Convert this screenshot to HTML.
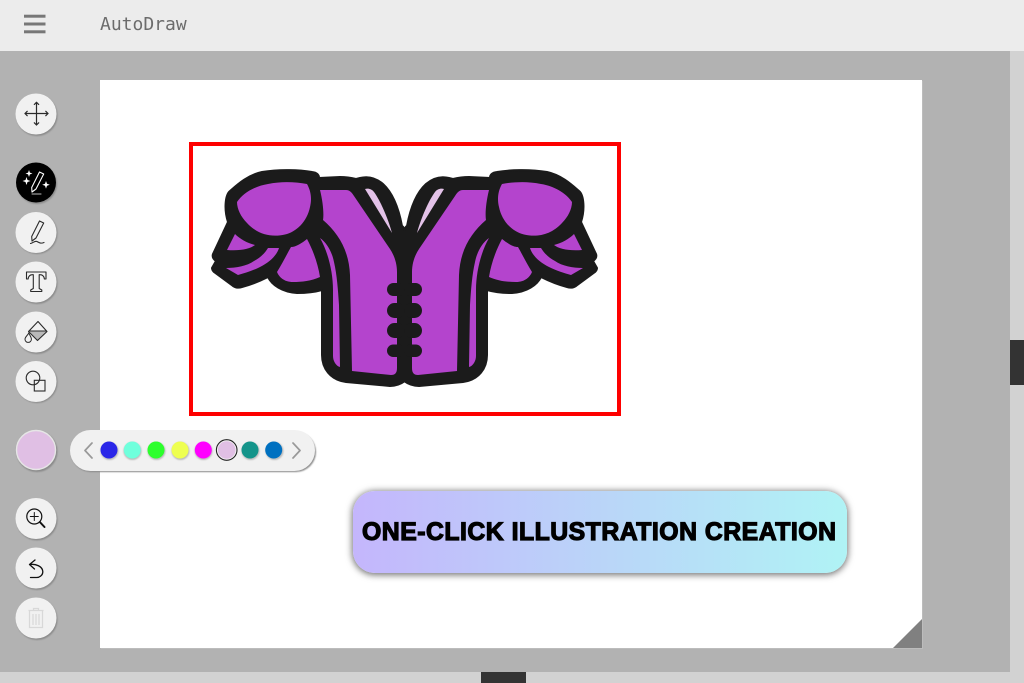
<!DOCTYPE html>
<html lang="en">
<head>
<meta charset="utf-8">
<title>AutoDraw</title>
<style>
html,body{margin:0;padding:0;width:1024px;height:683px;overflow:hidden;background:#b2b2b2}
.abs{position:absolute}
#sr{left:1010px;top:0;width:14px;height:683px;background:#d2d2d2}
#hdr{left:0;top:0;width:1024px;height:51px;background:#ececec}
#srt{left:1010px;top:340px;width:14px;height:45px;background:#333}
#sb{left:0;top:672px;width:1024px;height:11px;background:#d2d2d2}
#sbt{left:481px;top:672px;width:45px;height:11px;background:#333}
#title{left:100px;top:14px;font:18px/22px "DejaVu Sans Mono",monospace;color:#6c6c6c}
#cv{left:100px;top:80px;width:822px;height:568px;background:#fff;box-shadow:1px 1px 0 0 #bcbcbc}
#ban{left:353px;top:491px;width:494px;height:82px;border-radius:22px;background:linear-gradient(90deg,#c4b6fc,#b0f3f5);box-shadow:0 1px 7px 1px rgba(0,0,0,.55)}
svg{position:absolute;left:0;top:0}
</style>
</head>
<body>
<div class="abs" id="sr"></div>
<div class="abs" id="hdr"></div>
<div class="abs" id="sb"></div>
<div class="abs" id="srt"></div>
<div class="abs" id="sbt"></div>
<div class="abs" id="title">AutoDraw</div>
<div class="abs" id="cv"></div>
<div class="abs" id="ban"></div>
<svg width="1024" height="683" viewBox="0 0 1024 683" fill="none">
<defs>
<filter id="sh" x="-20%" y="-20%" width="140%" height="150%"><feGaussianBlur stdDeviation=".7"/></filter>
<g id="half">
  <path fill="#1b1b1b" stroke="#1b1b1b" stroke-width="2" stroke-linejoin="round" d="M319 178C319 174 316 172.500 312 172C300 170 280 169 262 172C248 175 238 184 230 191C225 195 224 210 228 222L213 254C212 257 213 259 216 261L212 268C212 270 213 271 214 272L233 286C236 288 239 288 242 287C250 285 260 281 268 277C272 285 282 292 297 293C306 293 315 292 322 290L322 355C322 368 330 380 346 382L390 386C396 386 401 384 405 381L405 231C404 228 403 226 402 226C399 210 394 194 383 184C376 178 368 176 360 178L356 179C352 178 345 177 340 177L319 178Z"/>
  <path fill="#b444cd" d="M320 190L346 190C350 190 352 193 354 196L390 249C394 255 397 263 397 272L397 368C397 373 395 375 391 375L352 371L350 275C349 250 338 233 323 220C324 214 323 202 320 190Z"/>
  <g fill="#1b1b1b">
    <rect x="387" y="283" width="18" height="13" rx="6.500"/>
    <rect x="387" y="303" width="18" height="15" rx="7.500"/>
    <rect x="387" y="323" width="18" height="15" rx="7.500"/>
    <rect x="387" y="344.500" width="18" height="12.500" rx="6.200"/>
  </g>
  <path fill="#b444cd" d="M237 202C243 193 255 186 268 184C282 181 296 182 307 184C311 191 312 199 310 207C307 222 296 232 285 234.500C272 237.500 258 235 247 223C241 217 237 209 237 202Z"/>
  <path fill="#b444cd" d="M235 234C240 239 247 243 255 245C250 249 240 251 227 250Z"/>
  <path fill="#b444cd" d="M268 248L279 248C277 255 270 262 260 267C252 271 245 273 238 275L226 268C236 268 247 266 254 261C260 258 265 253 268 248Z"/>
  <path fill="#b444cd" d="M307 239C313 250 318 264 320 277C311 281 302 282 293 282C284 282 279 277 277 272C282 264 287 254 291 247C296 247 302 243 307 239Z"/>
  <path fill="#b444cd" d="M320 238C327 243 332 252 334 262C337 275 338 290 339 305L340 367C336 366 333 361 333 356L333 290C333 272 328 252 320 238Z"/>
  <path fill="#e3c2e8" d="M365 189C368 188 372 189 374 192C380 200 388 218 392 233Z"/>
</g>
</defs>

<!-- hamburger -->
<g fill="#777"><rect x="24" y="14.700" width="21.500" height="3"/><rect x="24" y="22.500" width="21.500" height="3"/><rect x="24" y="30.300" width="21.500" height="3"/></g>

<!-- tool button shadows & bodies -->
<g fill="#8a8a8a" filter="url(#sh)">
<circle cx="37" cy="115.500" r="20.500"/><circle cx="37" cy="184" r="20"/><circle cx="37" cy="233.500" r="20.500"/><circle cx="37" cy="283.500" r="20.500"/><circle cx="37" cy="333.500" r="20.500"/><circle cx="37" cy="382.500" r="20.500"/><circle cx="37" cy="451.500" r="20.500"/><circle cx="37" cy="520" r="20.500"/><circle cx="37" cy="569.500" r="20.500"/><circle cx="37" cy="619.500" r="20.500"/>
</g>
<g fill="#f1f1f1">
<circle cx="36" cy="114" r="20.500"/><circle cx="36" cy="232.500" r="20.500"/><circle cx="36" cy="282" r="20.500"/><circle cx="36" cy="332" r="20.500"/><circle cx="36" cy="381.500" r="20.500"/><circle cx="36" cy="518.500" r="20.500"/><circle cx="36" cy="568" r="20.500"/><circle cx="36" cy="618" r="20.500"/>
</g>
<circle cx="36" cy="182.500" r="20" fill="#000"/>
<circle cx="36" cy="450" r="19.500" fill="#e0bfe4" stroke="#e6e6e6" stroke-width="1.400"/>

<!-- move -->
<g stroke="#2a2a2a" stroke-width="1.200" stroke-linecap="round" stroke-linejoin="round">
<path d="M36.500 102.500V125M25 113.500H48"/>
<path d="M34.300 104.500L36.500 102.300L38.700 104.500M34.300 122.800L36.500 125L38.700 122.800M27.200 111.300L25 113.500L27.200 115.700M45.800 111.300L48 113.500L45.800 115.700"/>
</g>
<!-- magic pen -->
<g stroke="#fff" stroke-width="1.100" stroke-linejoin="round" stroke-linecap="round">
<path d="M39.500 172L43.700 174L36 189L32 192L31.700 187.500Z"/>
<path d="M32 194H41" stroke="#bbb"/>
</g>
<g fill="#fff">
<path d="M29 170L29.900 172.600L32.500 173.500L29.900 174.400L29 177L28.100 174.400L25.500 173.500L28.100 172.600Z"/>
<path d="M26.500 177L27.500 180L30.500 181L27.500 182L26.500 185L25.500 182L22.500 181L25.500 180Z"/>
<path d="M46 181L47 183.800L49.800 184.800L47 185.800L46 188.600L45 185.800L42.200 184.800L45 183.800Z"/>
</g>
<!-- pen -->
<g stroke="#2a2a2a" stroke-width="1.100" stroke-linejoin="round" stroke-linecap="round">
<path d="M39.500 221L43.700 223L36 238L32 241L31.700 236.500Z"/>
<path d="M30.500 243.500C33 243 35 240.500 37 241.500C39 242.500 40.500 244 44 242.500"/>
</g>
<!-- T -->
<path stroke="#2a2a2a" stroke-width="1.100" stroke-linejoin="round" fill="none" d="M26.500 272H46V279H44.400C44 276 42.500 274.700 40 274.700H39.200V288.500L41.800 290V291.500H30.700V290L33.300 288.500V274.700H32.500C30 274.700 28.500 276 28.100 279H26.500Z"/>
<!-- fill bucket -->
<path fill="#b9b9b9" d="M29 331H47L37.500 340.500Z"/>
<path stroke="#2a2a2a" stroke-width="1.100" stroke-linejoin="round" d="M38 321.500L47 331.500L37.500 340.500L28.500 331.500Z"/>
<path stroke="#2a2a2a" stroke-width="1" d="M29 331H47"/>
<path stroke="#2a2a2a" stroke-width="1" d="M28.800 333C27.500 335.500 25 337 25 339.200A3.200 3.200 0 0 0 31.400 339.200C31.400 337 29.800 335.500 28.800 333Z"/>
<!-- shapes -->
<g stroke="#2a2a2a" stroke-width="1.100">
<circle cx="33" cy="378" r="6.800"/>
<rect x="34.300" y="380.300" width="10.700" height="10.700"/>
</g>
<!-- colour palette -->
<rect x="71" y="432" width="245" height="40" rx="20" fill="#8a8a8a" filter="url(#sh)"/>
<rect x="70" y="430" width="245" height="41" rx="20.500" fill="#f1f1f1"/>
<g stroke="#999" stroke-width="1.700" stroke-linecap="round" stroke-linejoin="round">
<path d="M92 443L85 450.500L92 458M293 443L300 450.500L293 458"/>
</g>
<g fill="#bbb" filter="url(#sh)">
<circle cx="109.500" cy="451" r="9"/><circle cx="132.500" cy="451" r="9"/><circle cx="156.500" cy="451" r="9"/><circle cx="180.500" cy="451" r="9"/><circle cx="203.500" cy="451" r="9"/><circle cx="250.500" cy="451" r="9"/><circle cx="274.500" cy="451" r="9"/>
</g>
<circle cx="109" cy="450" r="8.500" fill="#2a26e8"/>
<circle cx="132.300" cy="450" r="8.500" fill="#6fffdc"/>
<circle cx="156" cy="450" r="8.500" fill="#2cff2c"/>
<circle cx="180" cy="450" r="8.500" fill="#eeff50"/>
<circle cx="203.300" cy="450" r="8.500" fill="#ff00ff"/>
<circle cx="226.700" cy="450" r="10.300" fill="#f1f1f1" stroke="#222" stroke-width="1.100"/>
<circle cx="226.700" cy="450" r="8.800" fill="#e0bfe4"/>
<circle cx="250" cy="450" r="8.500" fill="#14948a"/>
<circle cx="273.700" cy="450" r="8.500" fill="#0070c0"/>

<!-- zoom -->
<g stroke="#111" stroke-linecap="round">
<circle cx="34.300" cy="516.500" r="7.500" stroke-width="1.200"/>
<path d="M34.300 512.500V520.500M30.300 516.500H38.300" stroke-width="1"/>
<path d="M39.800 522L44.500 527" stroke-width="2"/>
</g>
<!-- undo -->
<path stroke="#111" stroke-width="1.300" stroke-linecap="round" stroke-linejoin="round" d="M35 560L29.500 564.500L34.500 569M29.500 564.500C36 563.500 42.500 566.500 42.800 571.500C43 575.500 39 577.800 36 577.500L30.500 577.500"/>
<!-- trash -->
<g stroke="#d8d8d8" stroke-width="1.200">
<path d="M28.500 610.500H43.500M33.500 610V608.500H38.500V610"/>
<path d="M29.500 611V627.500H42.500V611"/>
<path d="M33 614V625M36 614V625M39 614V625"/>
</g>

<!-- red frame -->
<rect x="191" y="144" width="428" height="270" stroke="#fe0000" stroke-width="4"/>

<!-- shoulder pads -->
<use href="#half"/>
<use href="#half" transform="translate(809 0) scale(-1 1)"/>

<!-- corner fold -->
<path d="M893 648H922V619Z" fill="#808080"/>

<!-- banner text -->
<text x="362" y="540" textLength="474" lengthAdjust="spacing" font-family="'Liberation Sans',sans-serif" font-weight="700" font-size="24.800" fill="#000" stroke="#000" stroke-width="1.200">ONE-CLICK ILLUSTRATION CREATION</text>
</svg>
</body>
</html>
